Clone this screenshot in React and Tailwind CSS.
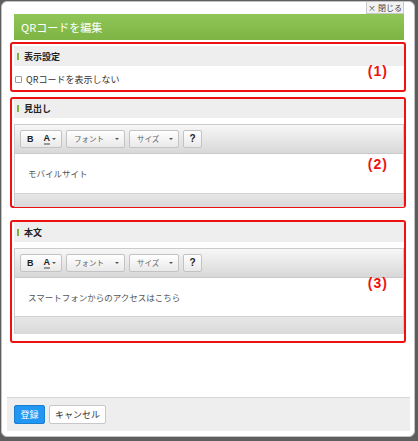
import React from 'react';

// small dropdown caret
const Caret = () => (
  <span className="inline-block w-0 h-0 border-l-[2px] border-r-[2px] border-t-[2px] border-l-transparent border-r-transparent border-t-[#555]" />
);

const SectionHeader = ({ label }) => (
  <div className="h-[20px] bg-[#eeeeee] flex items-center pl-[3px] gap-[5px]">
    <span className="w-[2px] h-[7px] bg-[#7cb342]" />
    <span className="text-[9px] font-bold text-[#222] leading-none">{label}</span>
  </div>
);

const Note = ({ n, top }) => (
  <span
    className={`absolute right-[16px] ${top} text-[14px] leading-[14px] tracking-[1px] font-bold text-[#ee1111] font-['Liberation_Sans',sans-serif]`}
  >
    ({n})
  </span>
);

const Toolbar = () => (
  <div className="h-[29px] flex items-center gap-[4px] pl-[5px] bg-linear-to-b from-[#f7f7f7] to-[#d8d8d8] border-b border-[#c9c9c9]">
    <div className="h-[18px] w-[42px] flex items-center rounded-[2px] border border-[#c3c3c3] bg-linear-to-b from-white to-[#e9e9e9]">
      <span className="ml-[6px] text-[9px] font-bold text-[#222] font-['Liberation_Sans',sans-serif] leading-none">B</span>
      <span className="ml-[10px] text-[9px] font-bold text-[#222] font-['Liberation_Sans',sans-serif] leading-none border-b-2 border-[#999]">A</span>
      <span className="ml-[2px] flex"><Caret /></span>
    </div>
    <div className="h-[18px] w-[59px] flex items-center rounded-[2px] border border-[#c3c3c3] bg-linear-to-b from-white to-[#e9e9e9]">
      <span className="ml-[7px] text-[7.5px] text-[#666] leading-none">フォント</span>
      <span className="ml-auto mr-[5px] flex"><Caret /></span>
    </div>
    <div className="h-[18px] w-[50px] flex items-center rounded-[2px] border border-[#c3c3c3] bg-linear-to-b from-white to-[#e9e9e9]">
      <span className="ml-[7px] text-[7.5px] text-[#666] leading-none">サイズ</span>
      <span className="ml-auto mr-[5px] flex"><Caret /></span>
    </div>
    <div className="h-[18px] w-[19px] flex items-center justify-center rounded-[2px] border border-[#c3c3c3] bg-linear-to-b from-white to-[#e9e9e9]">
      <span className="text-[10px] font-bold text-[#222] font-['Liberation_Sans',sans-serif] leading-none">?</span>
    </div>
  </div>
);

const Editor = ({ text, contentH, barH }) => (
  <div className="mt-[6px] border border-[#cbcbcb] border-b-0">
    <Toolbar />
    <div className={`${contentH} bg-white flex items-center pl-[13px]`}>
      <span className="text-[8.5px] text-[#555] leading-none">{text}</span>
    </div>
    <div className={`${barH} bg-linear-to-b from-[#e7e7e7] to-[#d9d9d9] border-t border-[#d2d2d2]`} />
  </div>
);

export default function App() {
  return (
    <div className="w-[418px] h-[441px] bg-[#5e5e5e] pt-[1px] pl-[1px] overflow-hidden font-['Noto_Sans_CJK_JP',sans-serif]">
      <div className="w-[414px] h-[436px] bg-white rounded-[6px] border border-[#c4c4c4] flex flex-col">
        <div className="pl-[12px] pr-[10px]">
          {/* close */}
          <div className="flex justify-end">
            <button className="h-[12px] w-[38px] bg-[#f2f2f2] border border-t-0 border-[#c9c9c9] text-[8px] leading-none text-[#444] flex items-center justify-center">
              × 閉じる
            </button>
          </div>

          {/* title */}
          <div className="h-[26px] bg-linear-to-b from-[#90c657] to-[#7db443] flex items-center pl-[7px]">
            <span className="text-[11px] text-white leading-none">QRコードを編集</span>
          </div>

          {/* (1) display settings */}
          <div className="relative mt-[2px] -ml-[4px] -mr-[2px] h-[50px] border-2 border-[#ee1111] rounded-[3px] pt-[2px] pl-[2px]">
            <SectionHeader label="表示設定" />
            <div className="h-[24px] flex items-center pt-[2px] pl-[1px] gap-[4px]">
              <span className="w-[7px] h-[7px] border border-[#9a9a9a] bg-white rounded-[1px]" />
              <span className="text-[9px] text-[#333] leading-none">QRコードを表示しない</span>
            </div>
            <Note n="1" top="top-[20px]" />
          </div>

          {/* (2) heading */}
          <div className="relative mt-[5px] -ml-[4px] -mr-[2px] h-[111px] border-2 border-[#ee1111] rounded-[3px] pl-[2px]">
            <div className="h-[19px] bg-[#eeeeee] flex items-center pl-[3px] gap-[5px]">
              <span className="w-[2px] h-[7px] bg-[#7cb342]" />
              <span className="text-[9px] font-bold text-[#222] leading-none">見出し</span>
            </div>
            <Editor text="モバイルサイト" contentH="h-[39px]" barH="h-[14px]" />
            <Note n="2" top="top-[58px]" />
          </div>

          {/* (3) body */}
          <div className="relative mt-[12px] -ml-[4px] -mr-[2px] h-[123px] border-2 border-[#ee1111] rounded-[3px] pl-[2px]">
            <SectionHeader label="本文" />
            <Editor text="スマートフォンからのアクセスはこちら" contentH="h-[38px]" barH="h-[18px]" />
            <Note n="3" top="top-[54px]" />
          </div>
        </div>

        {/* footer */}
        <div className="mt-auto ml-[5px] mr-[4px] mb-[5px] h-[34px] bg-[#eeeeee] border-t border-[#d6d6d6] flex items-center gap-[4px] pl-[7px]">
          <button className="h-[19px] w-[31px] bg-[#2196f3] border border-[#1a7fd0] rounded-[2px] text-[9px] text-white leading-none">
            登録
          </button>
          <button className="h-[19px] w-[57px] bg-white border border-[#c8c8c8] rounded-[2px] text-[9px] text-[#333] leading-none">
            キャンセル
          </button>
        </div>
      </div>
    </div>
  );
}
